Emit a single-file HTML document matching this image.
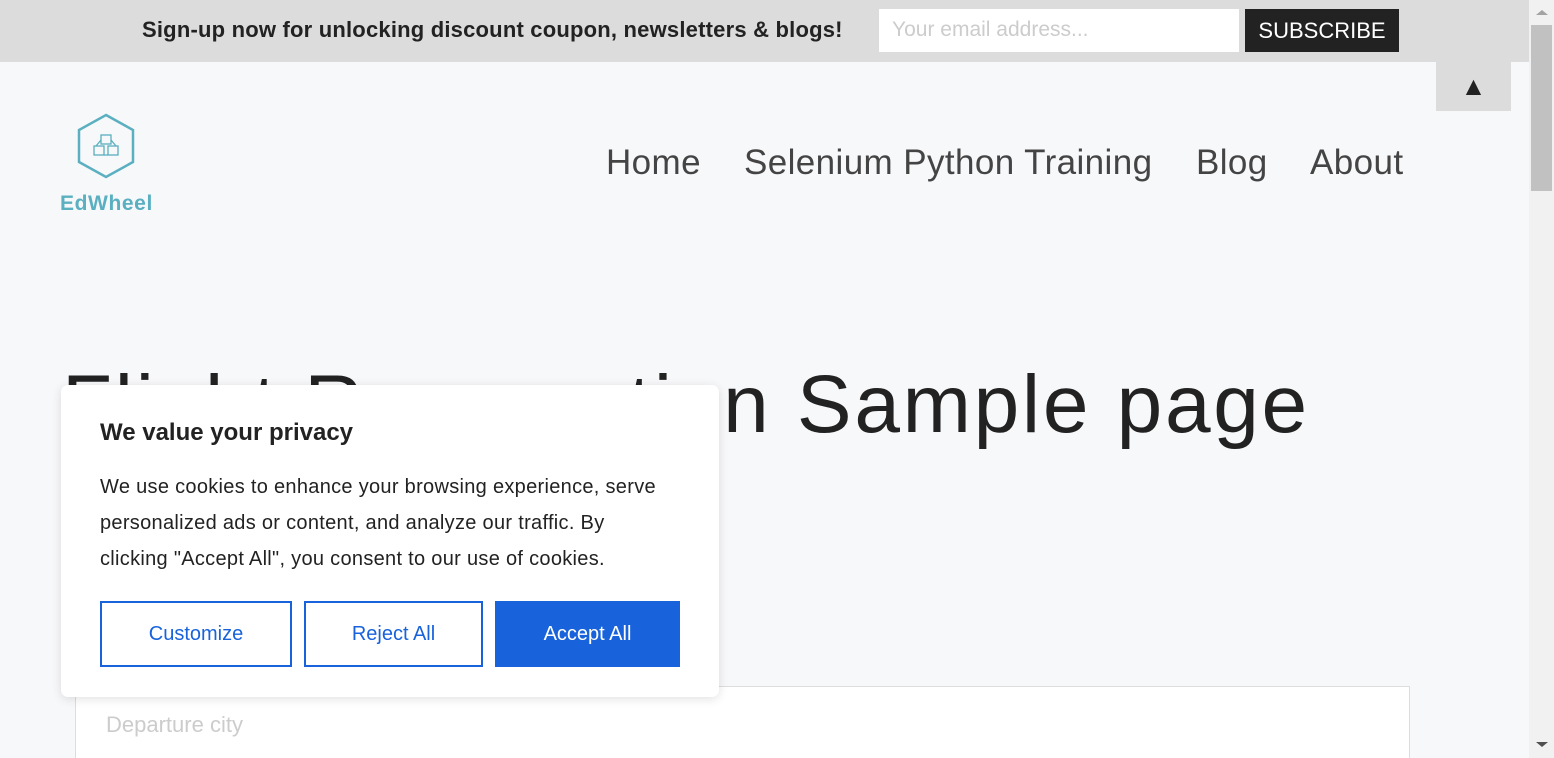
<!DOCTYPE html>
<html style="overflow:hidden"><head><meta charset="utf-8"><style>
*{margin:0;padding:0;box-sizing:border-box}
body{width:1554px;height:758px;overflow:hidden;background:#f7f8fa;font-family:"Liberation Sans",Arial,sans-serif;position:relative}
.top{position:absolute;left:0;top:0;width:1529px;height:62px;background:#dcdcdc}
.top .msg{position:absolute;left:142px;top:17px;font-size:22px;font-weight:bold;color:#222;letter-spacing:.2px}
.top .inp{position:absolute;left:879px;top:9px;width:360px;height:43px;background:#fff;color:#ccc;font-size:21px;padding:9px 13px}
.top .btn{position:absolute;left:1245px;top:9px;width:154px;height:43px;background:#222;color:#fff;font-size:22px;text-align:center;line-height:43px}
.totop{position:absolute;left:1436px;top:62px;width:75px;height:49px;background:#dcdcdc;text-align:center;font-size:26px;line-height:49px;color:#222}
.sb{position:absolute;left:1529px;top:0;width:25px;height:758px;background:#f1f1f1}
.sb .th{position:absolute;left:2px;top:25px;width:21px;height:166px;background:#c1c1c1}
.nav{position:absolute;top:143px;font-size:35px;color:#444;letter-spacing:.4px}
.logo{position:absolute;left:60px;top:192px;font-size:21px;font-weight:bold;color:#5aafc0;letter-spacing:.6px}
h1{position:absolute;left:62px;top:358px;font-size:82px;font-weight:normal;color:#222;white-space:nowrap;letter-spacing:2.7px}
.form{position:absolute;left:75px;top:686px;width:1335px;height:72px;background:#fff;border:1px solid #ddd;border-bottom:0}
.form span{position:absolute;left:30px;top:25px;font-size:22px;color:#ccc}
.cook{position:absolute;left:61px;top:385px;width:658px;height:312px;background:#fff;border-radius:7px;box-shadow:0 2px 10px rgba(0,0,0,.12)}
.cook h2{position:absolute;left:39px;top:34px;font-size:24px;color:#222}
.cook p{position:absolute;left:39px;top:84px;width:565px;font-size:20px;line-height:36px;color:#222;letter-spacing:.3px}
.b{position:absolute;top:216px;height:66px;border:2px solid #1863dc;color:#1863dc;font-size:20px;text-align:center;line-height:62px}
</style></head><body>
<div class="top"><div class="msg">Sign-up now for unlocking discount coupon, newsletters &amp; blogs!</div><div class="inp">Your email address...</div><div class="btn">SUBSCRIBE</div></div>
<div class="totop">▲</div>
<div class="sb"><div class="th"></div><div style="position:absolute;left:7px;top:10px;border:6px solid transparent;border-bottom:5px solid #a3a3a3;border-top:0"></div><div style="position:absolute;left:7px;top:742px;border:6px solid transparent;border-top:5px solid #505050;border-bottom:0"></div></div>
<svg style="position:absolute;left:76px;top:113px" width="60" height="66" viewBox="0 0 60 66"><polygon points="30,2 57,17 57,49 30,64 3,49 3,17" fill="none" stroke="#5aafc0" stroke-width="2.5"/><g fill="none" stroke="#5aafc0" stroke-width="1.3"><rect x="25" y="22" width="10" height="9"/><rect x="18" y="33" width="10" height="9"/><rect x="32" y="33" width="10" height="9"/><path d="M25 27 L20 33 M35 27 L40 33 M28 42 L32 42"/></g></svg>
<div class="logo">EdWheel</div>
<div class="nav" style="left:606px">Home</div>
<div class="nav" style="left:744px">Selenium Python Training</div>
<div class="nav" style="left:1196px">Blog</div>
<div class="nav" style="left:1310px">About</div>
<h1>Flight Reservation Sample page</h1>
<div class="form"><span>Departure city</span></div>
<div class="cook"><h2>We value your privacy</h2><p>We use cookies to enhance your browsing experience, serve personalized ads or content, and analyze our traffic. By clicking "Accept All", you consent to our use of cookies.</p>
<div class="b" style="left:39px;width:192px">Customize</div>
<div class="b" style="left:243px;width:179px">Reject All</div>
<div class="b" style="left:434px;width:185px;background:#1863dc;color:#fff">Accept All</div></div>
</body></html>
